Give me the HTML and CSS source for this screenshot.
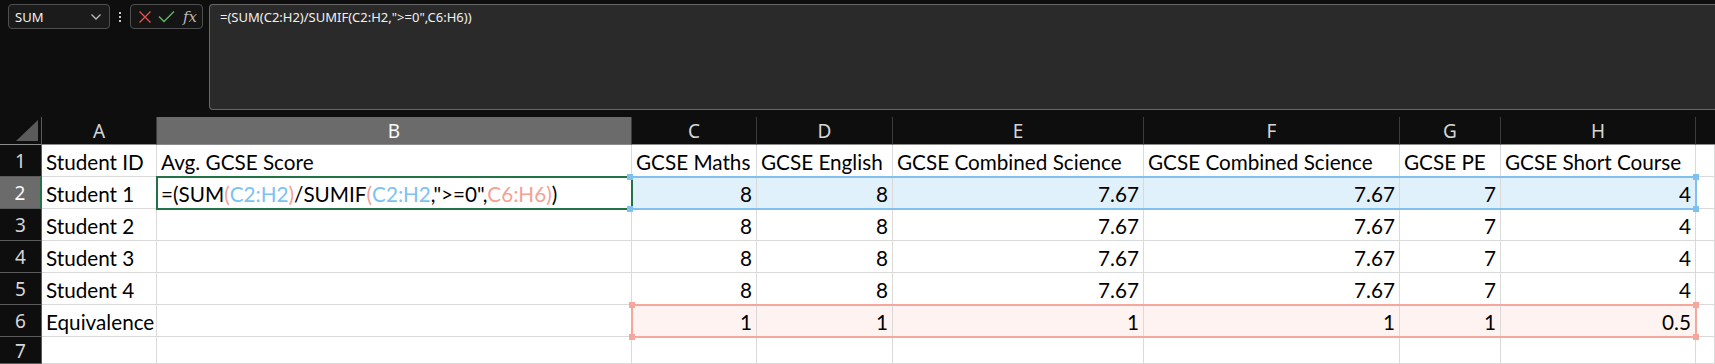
FILE: index.html
```html
<!DOCTYPE html>
<html lang="en">
<head>
<meta charset="utf-8">
<title>Excel sheet</title>
<link rel="stylesheet" href="styles.css">
</head>
<body>
<div class="app">
  <header class="bar">
    <div class="controls">
      <div class="namebox">
        <span>SUM</span>
        <svg class="chev" width="12" height="8" viewBox="0 0 12 8"><path d="M1.5 1.5 L6 6 L10.5 1.5" fill="none" stroke="#bdbdbd" stroke-width="1.3"/></svg>
      </div>
      <div class="dots"><i></i><i></i><i></i></div>
      <div class="fnbox">
        <svg width="14" height="14" viewBox="0 0 14 14"><path d="M1.5 1.5 L12.5 12.5 M12.5 1.5 L1.5 12.5" stroke="#e0514b" stroke-width="1.4" fill="none"/></svg>
        <svg width="17" height="13" viewBox="0 0 17 13"><path d="M1 6.5 L6 11.5 L16 1.5" stroke="#5fb760" stroke-width="1.4" fill="none"/></svg>
        <span class="fx">fx</span>
      </div>
    </div>
    <div class="formula">=(SUM(C2:H2)/SUMIF(C2:H2,"&gt;=0",C6:H6))</div>
  </header>

  <div class="sheet-wrap">
    <div class="sheet">
      <div class="corner"><span class="tri"></span></div>
      <div class="ch">A</div><div class="ch sel">B</div><div class="ch">C</div><div class="ch">D</div><div class="ch">E</div><div class="ch">F</div><div class="ch">G</div><div class="ch">H</div><div class="ch last"></div>

      <div class="rh">1</div>
      <div class="c">Student ID</div><div class="c">Avg. GCSE Score</div><div class="c">GCSE Maths</div><div class="c">GCSE English</div><div class="c">GCSE Combined Science</div><div class="c">GCSE Combined Science</div><div class="c">GCSE PE</div><div class="c">GCSE Short Course</div><div class="c"></div>

      <div class="rh sel">2</div>
      <div class="c">Student 1</div>
      <div class="c edit">=(SUM<span class="r">(</span><span class="b">C2:H2</span><span class="r">)</span>/SUMIF<span class="r">(</span><span class="b">C2:H2</span>,"&gt;=0",<span class="r">C6:H6</span><span class="r">)</span>)</div>
      <div class="c n blue">8</div><div class="c n blue">8</div><div class="c n blue">7.67</div><div class="c n blue">7.67</div><div class="c n blue">7</div><div class="c n blue">4</div><div class="c"></div>

      <div class="rh">3</div>
      <div class="c">Student 2</div><div class="c"></div><div class="c n">8</div><div class="c n">8</div><div class="c n">7.67</div><div class="c n">7.67</div><div class="c n">7</div><div class="c n">4</div><div class="c"></div>

      <div class="rh">4</div>
      <div class="c">Student 3</div><div class="c"></div><div class="c n">8</div><div class="c n">8</div><div class="c n">7.67</div><div class="c n">7.67</div><div class="c n">7</div><div class="c n">4</div><div class="c"></div>

      <div class="rh">5</div>
      <div class="c">Student 4</div><div class="c"></div><div class="c n">8</div><div class="c n">8</div><div class="c n">7.67</div><div class="c n">7.67</div><div class="c n">7</div><div class="c n">4</div><div class="c"></div>

      <div class="rh">6</div>
      <div class="c">Equivalence</div><div class="c"></div><div class="c n pink">1</div><div class="c n pink">1</div><div class="c n pink">1</div><div class="c n pink">1</div><div class="c n pink">1</div><div class="c n pink">0.5</div><div class="c"></div>

      <div class="rh">7</div>
      <div class="c"></div><div class="c"></div><div class="c"></div><div class="c"></div><div class="c"></div><div class="c"></div><div class="c"></div><div class="c"></div><div class="c"></div>
    </div>

    <div class="overlays">
      <div class="active"></div>
      <div class="range range-blue"><i class="h tl"></i><i class="h tr"></i><i class="h bl"></i><i class="h br"></i></div>
      <div class="range range-red"><i class="h tl"></i><i class="h tr"></i><i class="h bl"></i><i class="h br"></i></div>
    </div>
  </div>
</div>
</body>
</html>
```

FILE: styles.css
```css
* { box-sizing: border-box; }

html, body {
  margin: 0;
  padding: 0;
  background: #0e0e0e;
  width: 1715px;
  height: 364px;
  overflow: hidden;
}

.app {
  width: 1715px;
  height: 364px;
  font-family: "Noto Sans", "Open Sans", sans-serif;
}

/* ---------- formula bar ---------- */
.bar {
  display: flex;
  align-items: flex-start;
  height: 117px;
  padding: 4px 0 0 8px;
}

.controls {
  display: flex;
  align-items: center;
  height: 25px;
}

.namebox {
  width: 102px;
  height: 25px;
  border: 1px solid #4f4f4f;
  border-radius: 4px;
  background: #1b1b1b;
  display: flex;
  align-items: center;
  justify-content: space-between;
  padding: 0 7px 0 6px;
  color: #f2f2f2;
  font-size: 13px;
}

.chev { margin-top: 1px; }

.dots {
  width: 20px;
  display: flex;
  flex-direction: column;
  align-items: center;
  gap: 2px;
}
.dots i {
  display: block;
  width: 2px;
  height: 2px;
  background: #c8c8c8;
}

.fnbox {
  width: 73px;
  height: 25px;
  border: 1px solid #4f4f4f;
  border-radius: 4px;
  background: #151515;
  display: flex;
  align-items: center;
  padding: 0 4px 0 7px;
  gap: 6px;
}

.fx {
  font-family: "DejaVu Serif", "Liberation Serif", serif;
  font-style: italic;
  font-size: 15px;
  color: #b9b9b9;
  margin-left: 2px;
}

.formula {
  flex: 1;
  margin-left: 6px;
  height: 106px;
  border: 1px solid #676767;
  border-right: none;
  border-radius: 4px 0 0 4px;
  background: #2a2a2a;
  color: #f0f0f0;
  font-size: 13px;
  line-height: 18px;
  padding: 3px 10px;
}

/* ---------- sheet ---------- */
.sheet-wrap {
  display: grid;
}

.sheet, .overlays {
  grid-area: 1 / 1;
  display: grid;
  grid-template-columns: 42px 115px 475px 125px 136px 251px 256px 101px 195px 1fr;
  grid-template-rows: 28px repeat(6, 32px) 27px;
}

.overlays { pointer-events: none; }

.corner {
  background: #0e0e0e;
  border-right: 1px solid #5a5a5a;
  border-bottom: 1px solid #8c8c8c;
  display: flex;
  align-items: flex-end;
  justify-content: flex-end;
  padding: 0 3px 3px 0;
}
.tri {
  width: 0;
  height: 0;
  border-left: 22px solid transparent;
  border-bottom: 21px solid #5b5b5b;
}

.ch {
  background: #0e0e0e;
  color: #d6d6d6;
  font-size: 19px;
  display: flex;
  align-items: center;
  justify-content: center;
  border-right: 1px solid #3c3c3c;
  border-bottom: 1px solid #8c8c8c;
  padding-top: 1px;
}
.ch.sel { background: #6b6b6b; color: #fafafa; }
.ch.last { border-right: none; }

.rh {
  background: #0e0e0e;
  color: #d6d6d6;
  font-size: 19px;
  display: flex;
  align-items: center;
  justify-content: center;
  border-right: 1px solid #5a5a5a;
  border-bottom: 1px solid #5a5a5a;
  padding-top: 1px;
}
.rh.sel {
  background: #6b6b6b;
  color: #fafafa;
  border-right: 2px solid #217346;
}

.c {
  background: #ffffff;
  color: #000000;
  font-family: "Lato", "Liberation Sans", sans-serif;
  font-size: 20.7px;
  display: flex;
  align-items: center;
  padding: 2px 4px 0 4px;
  border-right: 1px solid #dadada;
  border-bottom: 1px solid #dadada;
  white-space: nowrap;
  overflow: visible;
}
.c.n { justify-content: flex-end; }
.c.blue { background: #e0f1fc; }
.c.pink { background: #fff3f2; }

.edit .r { color: #f4a196; }
.edit .b { color: #7cc2f2; }

/* ---------- overlays ---------- */
.active {
  grid-column: 3;
  grid-row: 3;
  margin: -1px -1px -1px -1px;
  border: 2px solid #217346;
}

.range {
  position: relative;
  margin: -1px -1px -1px -1px;
}
.range-blue {
  grid-column: 4 / 10;
  grid-row: 3;
  border: 2px solid #7fc0ef;
  border-left: none;
}
.range-red {
  grid-column: 4 / 10;
  grid-row: 7;
  border: 2px solid #f6a79d;
}

.h {
  position: absolute;
  width: 6px;
  height: 6px;
}
.range-blue .h { background: #7fc0ef; }
.range-red .h { background: #f6a79d; }
.h.tl { left: -4px; top: -4px; }
.h.tr { right: -4px; top: -4px; }
.h.bl { left: -4px; bottom: -4px; }
.h.br { right: -4px; bottom: -4px; }
```
